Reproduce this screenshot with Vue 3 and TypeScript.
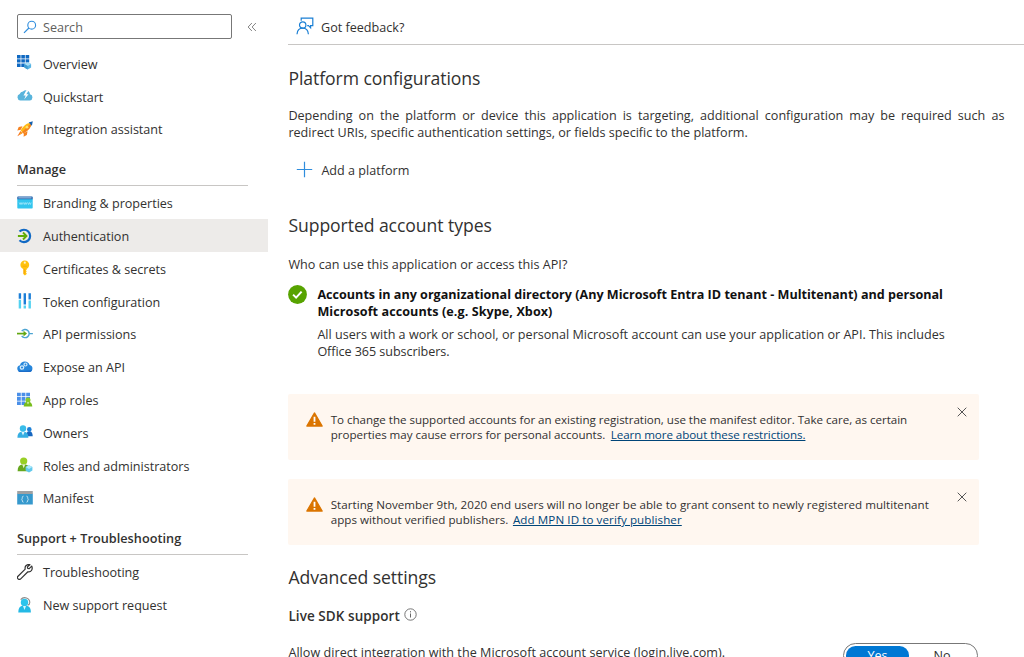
<script setup lang="ts">
import { ref } from 'vue'

interface NavItem {
  label: string
  icon: string
}

interface NavGroup {
  title?: string
  items: NavItem[]
}

const groups: NavGroup[] = [
  {
    items: [
      { label: 'Overview', icon: 'grid' },
      { label: 'Quickstart', icon: 'cloud-bolt' },
      { label: 'Integration assistant', icon: 'rocket' },
    ],
  },
  {
    title: 'Manage',
    items: [
      { label: 'Branding & properties', icon: 'branding' },
      { label: 'Authentication', icon: 'auth' },
      { label: 'Certificates & secrets', icon: 'key' },
      { label: 'Token configuration', icon: 'token' },
      { label: 'API permissions', icon: 'permission' },
      { label: 'Expose an API', icon: 'expose' },
      { label: 'App roles', icon: 'approles' },
      { label: 'Owners', icon: 'owners' },
      { label: 'Roles and administrators', icon: 'admin' },
      { label: 'Manifest', icon: 'manifest' },
    ],
  },
  {
    title: 'Support + Troubleshooting',
    items: [
      { label: 'Troubleshooting', icon: 'wrench' },
      { label: 'New support request', icon: 'support' },
    ],
  },
]

const selected = ref('Authentication')
const liveSdk = ref(true)

const notices = [
  {
    first: 'To change the supported accounts for an existing registration, use the manifest editor. Take care, as certain',
    second: 'properties may cause errors for personal accounts.',
    link: 'Learn more about these restrictions.',
  },
  {
    first: 'Starting November 9th, 2020 end users will no longer be able to grant consent to newly registered multitenant',
    second: 'apps without verified publishers.',
    link: 'Add MPN ID to verify publisher',
  },
]
</script>

<template>
  <div class="page">
    <aside class="sidebar">
      <div class="search-row">
        <label class="search">
          <svg class="search-icon" viewBox="0 0 14 14">
            <circle cx="8.7" cy="5.2" r="3.9" fill="none" stroke="#2f8ddd" stroke-width="1.1" />
            <path d="M5.9 8 1 12.9" fill="none" stroke="#2f8ddd" stroke-width="1.2" />
          </svg>
          <span>Search</span>
        </label>
        <svg class="collapse" viewBox="0 0 10 10">
          <path d="M4.9 1 1.1 5l3.8 4M8.9 1 5.1 5l3.8 4" fill="none" stroke="#777" stroke-width="0.9" />
        </svg>
      </div>

      <nav v-for="(group, gi) in groups" :key="gi">
        <h3 v-if="group.title" class="group-title">
          <span>{{ group.title }}</span>
        </h3>
        <a
          v-for="item in group.items"
          :key="item.label"
          class="nav-item"
          :class="{ selected: item.label === selected }"
          @click="selected = item.label"
        >
          <svg class="nav-icon" viewBox="0 0 16 16">
            <g v-if="item.icon === 'grid'">
              <path fill="#0f69c2" d="M0 0h3.6v3.4H0zM4.3 0h3.6v3.4H4.3zM8.6 0h3.6v3.4H8.6zM0 4.2h3.6v3.4H0zM4.3 4.2h3.6v3.4H4.3zM8.6 4.2h3.6v3.4H8.6zM0 8.4h3.6v3.6H0zM4.3 8.4h3.6v3.6H4.3z" />
              <path fill="#57b4e4" d="m10.7 7.2 3.4 1.8v3.5l-3.4 1.9-3.4-1.9V9z" />
              <path fill="#a9dcf5" d="m10.7 7.2 3.4 1.8-3.4 1.9L7.3 9z" />
              <path fill="#3f9bd1" d="M7.3 9l3.4 1.9v3.5l-3.4-1.9z" />
            </g>
            <g v-else-if="item.icon === 'cloud-bolt'">
              <path fill="#58b4dc" d="M3.3 12.4A3.3 3.3 0 0 1 2.7 6 3.6 3.6 0 0 1 6 3.500 4 4 0 0 1 9 2.200a4.400 4.400 0 0 1 4 4.100 3.100 3.100 0 0 1-.2 6.100z" />
              <path fill="#fff" d="M9.300 2.300 6.500 7.400h2.200l-1.500 4.100 4.300-5.200H9.300l2.500-4z" />
            </g>
            <g v-else-if="item.icon === 'rocket'">
              <path fill="#f58220" d="M5.500 5.200 1.700 6.100.3 9.500l3.500-.7zM10.600 10.300l-.8 3.700-3.200 1.800.3-3.800z" />
              <path fill="#ffb913" d="M15 1.500C10 1.600 6.300 4.800 3.600 9.500l2.800 2.900C11 9.700 14.500 6.200 15 1.500z" />
              <path fill="#f58220" d="M14.900 1.500c-.4 4.700-3.900 8.200-8.500 10.900L5 11z" />
              <path fill="#1761ae" d="M11.600 1.500 15.800.3l-.9 4.400z" />
              <circle cx="10" cy="6.200" r="1.400" fill="#ffdf68" />
              <path fill="#f5701e" d="M3.500 10.100.3 15.300l5.200-3.100z" />
              <path fill="#ffc51b" d="m4 11.200-2.200 3 3-2.200z" />
            </g>
            <g v-else-if="item.icon === 'branding'">
              <path fill="#32c5ee" d="M.3 4h15.400v8.800a.7.7 0 0 1-.7.7H1a.7.7 0 0 1-.7-.7z" />
              <path fill="#155aa8" d="M1 1.500h14a.7.7 0 0 1 .7.7v2.100H.3V2.200a.7.7 0 0 1 .7-.7z" />
              <path fill="#c3d8ee" d="M1.300 2.400h13.300v1H1.300z" />
              <path d="m2.200 7.500.9 2 .9-2 .9 2 .9-2m.6 0 .9 2 .9-2 .9 2 .9-2m.6 0 .9 2 .9-2 .9 2 .9-2" fill="none" stroke="#b6ecfb" stroke-width=".7" />
            </g>
            <g v-else-if="item.icon === 'auth'">
              <path d="M2.500 3.600a6.200 6.200 0 1 1 0 8.700" fill="none" stroke="#1169c4" stroke-width="2.200" />
              <path d="M.9 8h7.700M6 4.500 9.500 8 6 11.500" fill="none" stroke="#62ad09" stroke-width="1.900" />
            </g>
            <g v-else-if="item.icon === 'key'">
              <path fill="#ffc20e" d="M7.800.4a4.400 4.400 0 0 1 4.400 4.400c0 1.900-1 3.400-2.500 4v.9l-.8.9.8.9-.8 1 .8 1v.6L7.900 15.600 6.300 14V8.900A4.300 4.300 0 0 1 3.400 4.800 4.400 4.400 0 0 1 7.800.4z" />
              <circle cx="7.800" cy="2.700" r="1.100" fill="#fff3cc" />
              <path d="M7.200 9v4.800" stroke="#f5910b" stroke-width=".7" />
              <path d="M5.700 6.200h4.200" stroke="#f7a50a" stroke-width=".8" />
            </g>
            <g v-else-if="item.icon === 'token'">
              <path fill="#1c7fd8" d="M1.700.3h2.400v5.500H1.700zM6.600.3H9v11.200H6.600zM11.500.3h2.400v6.200h-2.400z" />
              <path fill="#53d2f1" d="M1.700 6.800h2.400v8.800H1.700zM11.500 7.400h2.400v8.200h-2.400zM6.600 12.500H9v3.100H6.600z" />
            </g>
            <g v-else-if="item.icon === 'permission'">
              <path d="M4.700 5.200a4.100 4.100 0 1 1 0 4.700M12.200 7.600h3.700" fill="none" stroke="#4ca4d2" stroke-width="1.400" />
              <path d="M0 7.600h8.200" stroke="#62a712" stroke-width="1.700" />
              <path fill="#62a712" d="M6.500 4.800 10 7.600l-3.500 2.800z" />
            </g>
            <g v-else-if="item.icon === 'expose'">
              <path fill="#2686db" d="M3.500 13.100A3.500 3.500 0 0 1 3 6.200a5 5 0 0 1 9.600-.2 3.600 3.600 0 0 1-.4 7.100z" />
              <path fill="#1b6cc8" d="M1 11.500c2 .5 10 .8 14.200-1-.5 1.600-1.600 2.600-3 2.600H3.500c-1 0-2-.6-2.500-1.600z" />
              <circle cx="8.500" cy="5.500" r="1.500" fill="none" stroke="#d0e9fa" stroke-width="1.200" />
              <circle cx="5" cy="8.500" r="1.700" fill="none" stroke="#d0e9fa" stroke-width="1.300" />
            </g>
            <g v-else-if="item.icon === 'approles'">
              <path fill="#4a8fe8" d="M0 .7h3.800v3.600H0zM4.600.7h3.800v3.600H4.600zM9.200.7H13v3.600H9.200zM0 5.100h3.800v3.600H0zM4.600 5.100h3.800v3.600H4.600zM9.200 5.100H13v3.600H9.200zM0 9.500h3.800v3.600H0zM4.600 9.500h3.800v3.600H4.600z" />
              <path fill="#78bd1c" d="M6.700 14.600c.1-2.800 1.100-4.200 2.800-4.600h3c1.700.4 2.600 1.800 2.800 4.600z" />
              <circle cx="11" cy="7.900" r="2.500" fill="#86ca27" />
              <path fill="#d8efb7" d="m9.800 10.300 1.200 2.200 1.200-2.200z" />
            </g>
            <g v-else-if="item.icon === 'owners'">
              <path fill="#1767c0" d="M9 12.300c.2-3 1-4.700 2.600-5h1.400c1.700.3 2.600 2 2.700 5z" />
              <circle cx="12.300" cy="5.400" r="2.300" fill="#1c80d7" />
              <path fill="#35aee2" d="M.4 13.700c0-3.700 1.400-5.600 4-5.900h3c2.500.3 4 2.200 4 5.900z" />
              <circle cx="6" cy="4.500" r="3.200" fill="#39bce9" />
              <path fill="#e1f6fd" d="M4.500 7.900 6 11.400l1.500-3.500z" />
            </g>
            <g v-else-if="item.icon === 'admin'">
              <path fill="#66a71e" d="M.6 14.200c0-3.900 1.500-6.300 4.200-6.700h4c2.600.4 4 2.800 4 6.700z" />
              <circle cx="6.700" cy="4" r="3.600" fill="#98cf25" />
              <path fill="#e7f4ce" d="m5.200 7.500 1.500 3.700 1.500-3.700z" />
              <path fill="#61c9ec" d="m12 8.200 3.400 1.800v3.500L12 15.400l-3.400-1.900V10z" />
              <path fill="#aee9fb" d="m12 8.200 3.400 1.800-3.400 1.900L8.600 10z" />
            </g>
            <g v-else-if="item.icon === 'manifest'">
              <path fill="#3699cd" d="M.2 3.500h15.600v11H.2z" />
              <path fill="#a0a1a2" d="M.2 1h15.600v3H.2z" />
              <path d="M6.500 6.200c-2 0-.5 2.500-2 3 1.500.5 0 3 2 3M9.500 6.200c2 0 .5 2.500 2 3-1.500.5 0 3-2 3" fill="none" stroke="#c9e7f5" stroke-width="1" />
            </g>
            <g v-else-if="item.icon === 'wrench'">
              <path d="M14.700 2.100 12.200 4.600l-1.500-.3-.3-1.400L12.900.7C9.800-.1 7.500 2.200 8.200 5.100L1 12.200a1.900 1.900 0 0 0 2.700 2.700l7.200-7.100c3 .7 5.300-2.200 3.800-5.700z" fill="none" stroke="#333" stroke-width="1.200" stroke-linejoin="round" />
            </g>
            <g v-else>
              <path d="M3.700 2.700C6.600-1 12.800.7 12.800 5.600c0 1.400-.8 2.300-2.200 2.600" fill="none" stroke="#8a8a8a" stroke-width="1.100" />
              <path fill="#24b9e5" d="M1.300 15.400c0-4 1.300-6.300 3.900-6.700h4.700c2.700.4 4 2.700 4 6.700z" />
              <circle cx="7.500" cy="5.500" r="3.700" fill="#2cc4ec" />
              <path fill="#daf6fd" d="m6 8.900 1.500 4.200L9 8.900z" />
            </g>
          </svg>
          <span>{{ item.label }}</span>
        </a>
      </nav>
    </aside>

    <main class="main">
      <header class="toolbar">
        <svg class="tool-icon" viewBox="0 0 18 18">
          <g fill="none" stroke="#1a7fd4" stroke-width="1.200">
            <path d="M5.200 3.800V1.100h11.600v7.600h-2.200v2.100l-2.100-2.100h-1.300" />
            <circle cx="6.700" cy="8" r="3.200" />
            <path d="M1 17.200c.3-3.700 2.300-6 5.700-6s5.400 2.300 5.700 6" />
          </g>
        </svg>
        <span>Got feedback?</span>
      </header>

      <section class="platform">
        <h2>Platform configurations</h2>
        <p class="intro">
          <span class="line justified">Depending on the platform or device this application is targeting, additional configuration may be required such as</span>
          <span class="line">redirect URIs, specific authentication settings, or fields specific to the platform.</span>
        </p>
        <button class="add">
          <svg class="plus" viewBox="0 0 17 17">
            <path d="M8.500.8v15.400M.8 8.500h15.400" fill="none" stroke="#2f8ddd" stroke-width="1.200" />
          </svg>
          <span>Add a platform</span>
        </button>
      </section>

      <section class="accounts">
        <h2>Supported account types</h2>
        <p class="question"><span>Who can use this application or access this API?</span></p>
        <div class="account">
          <svg class="check" viewBox="0 0 19 19">
            <circle cx="9.500" cy="9.500" r="9.400" fill="#57a300" />
            <path d="m5.100 9.600 3 3 5.500-6" fill="none" stroke="#fff" stroke-width="2" />
          </svg>
          <div>
            <p class="strong">
              <span class="line">Accounts in any organizational directory (Any Microsoft Entra ID tenant - Multitenant) and personal</span>
              <span class="line strong-rest">Microsoft accounts (e.g. Skype, Xbox)</span>
            </p>
            <p class="detail">
              <span class="line">All users with a work or school, or personal Microsoft account can use your application or API. This includes</span>
              <span class="line detail-rest">Office 365 subscribers.</span>
            </p>
          </div>
        </div>
      </section>

      <div v-for="(notice, ni) in notices" :key="ni" class="notice" :class="{ wide: ni === 1 }">
        <svg class="warn" viewBox="0 0 17 15">
          <path d="M8.500.9 16.200 14.100H.8z" fill="#db7500" stroke="#db7500" stroke-width="1.200" stroke-linejoin="round" />
          <path d="M8.500 4.800v4.900M8.500 10.900v1.800" fill="none" stroke="#fff" stroke-width="1.800" />
        </svg>
        <p class="notice-text">
          <span class="line">{{ notice.first }}</span>
          <span class="line second"><span>{{ notice.second }}</span><a>{{ notice.link }}</a></span>
        </p>
        <svg class="close" viewBox="0 0 10 10">
          <path d="m.7.7 8.600 8.600M9.300.7.7 9.300" fill="none" stroke="#555" stroke-width="1" />
        </svg>
      </div>

      <section class="advanced">
        <h2>Advanced settings</h2>
        <h4>
          <span>Live SDK support</span>
          <svg class="info" viewBox="0 0 13 13">
            <circle cx="6.500" cy="6.500" r="5.700" fill="none" stroke="#666" stroke-width=".9" />
            <path d="M6.500 5.500v4M6.500 3.200v1.200" stroke="#666" stroke-width="1" />
          </svg>
        </h4>
        <div class="setting">
          <span class="setting-label">Allow direct integration with the Microsoft account service (login.live.com).</span>
          <div class="toggle">
            <span :class="{ on: liveSdk }" @click="liveSdk = true">Yes</span>
            <span :class="{ on: !liveSdk }" @click="liveSdk = false">No</span>
          </div>
        </div>
      </section>
    </main>
  </div>
</template>

<style>
body {
  margin: 0;
  overflow: hidden;
}
</style>

<style scoped>
.page {
  display: flex;
  width: 1024px;
  height: 657px;
  overflow: hidden;
  background: #fff;
  color: #323130;
  font-family: 'Open Sans', 'Noto Sans', sans-serif;
  font-size: 12.6px;
}
p,
h2,
h3,
h4 {
  margin: 0;
}
.page span,
h2 {
  white-space: nowrap;
}
.line {
  display: block;
}

.sidebar {
  width: 268px;
  flex: none;
}
.search-row {
  display: flex;
  align-items: center;
  padding: 14px 0 8px 17px;
}
.search {
  box-sizing: border-box;
  display: flex;
  align-items: center;
  gap: 6px;
  width: 215px;
  height: 25px;
  padding-left: 5px;
  border: 1px solid #777;
  border-radius: 2px;
  color: #605e5c;
}
.search span {
  padding-top: 1px;
}
.search-icon {
  width: 14px;
  height: 14px;
}
.collapse {
  width: 10px;
  height: 10px;
  margin-left: 15px;
}
.nav-item {
  box-sizing: border-box;
  display: flex;
  align-items: center;
  gap: 10px;
  height: 32.8px;
  padding-left: 17px;
  cursor: pointer;
  letter-spacing: -0.02px;
}
.nav-item span {
  padding-top: 2px;
}
.nav-item.selected {
  background: #edebe9;
}
.nav-icon {
  width: 16px;
  height: 16px;
  flex: none;
}
.group-title {
  box-sizing: border-box;
  height: 40.4px;
  margin: 0 20.5px 0.6px 17px;
  padding-top: 14.6px;
  border-bottom: 1px solid #c8c6c4;
  font-size: 12.7px;
  font-weight: 600;
  line-height: 19px;
  letter-spacing: 0.03px;
}

.main {
  flex: 1;
  min-width: 0;
  padding-left: 20.4px;
}
.toolbar {
  box-sizing: border-box;
  display: flex;
  align-items: center;
  gap: 7px;
  height: 45px;
  padding: 10px 0 0 7.6px;
  border-bottom: 1px solid #c8c6c4;
}
.tool-icon {
  width: 18px;
  height: 18px;
  margin-top: -3px;
}
h2 {
  height: 26px;
  font-size: 17.6px;
  font-weight: 400;
  line-height: 26px;
  letter-spacing: -0.07px;
}
.platform {
  height: 147px;
  padding-top: 20px;
}
.intro {
  width: 716px;
  margin-top: 15.6px;
  line-height: 17.3px;
}
.page .justified {
  text-align: justify;
  text-align-last: justify;
  white-space: normal;
}
.add {
  display: flex;
  align-items: center;
  gap: 8px;
  margin: 20px 0 0 8px;
  padding: 0;
  border: 0;
  background: none;
  color: inherit;
  font: inherit;
}
.add span {
  padding-top: 1px;
}
.plus {
  width: 17px;
  height: 17px;
  margin-top: -1px;
}
.accounts {
  height: 182px;
}
.question {
  margin-top: 17.5px;
  line-height: 18px;
}
.question span {
  letter-spacing: 0.03px;
}
.account {
  display: flex;
  gap: 10px;
  margin-top: 12.3px;
}
.check {
  width: 19px;
  height: 19px;
  flex: none;
  margin-top: -0.7px;
}
.strong {
  color: #111;
  font-weight: 700;
  line-height: 17.2px;
}
.strong-rest {
  letter-spacing: 0.07px;
}
.detail {
  margin-top: 5.5px;
  line-height: 17.2px;
}
.detail-rest {
  letter-spacing: -0.07px;
}
.notice {
  box-sizing: border-box;
  display: flex;
  width: 690.5px;
  height: 65.5px;
  margin-bottom: 19.5px;
  padding: 17.7px 12px 0 17.3px;
  border-radius: 2px;
  background: #fff7f0;
  font-size: 11.6px;
  letter-spacing: -0.03px;
}
.notice.wide {
  letter-spacing: 0.035px;
}
.warn {
  width: 17px;
  height: 15px;
  flex: none;
}
.notice-text {
  flex: 1;
  margin-left: 8px;
  line-height: 15.5px;
}
.second {
  display: flex;
  gap: 5.5px;
}
.second a {
  color: #004578;
  text-decoration: underline;
  white-space: nowrap;
}
.notice:not(.wide) a {
  letter-spacing: -0.07px;
}
.notice.wide a {
  letter-spacing: 0.09px;
}
.notice.wide .second {
  gap: 4.5px;
}
.close {
  width: 10px;
  height: 10px;
  margin-top: -5px;
}
h4 {
  display: flex;
  align-items: center;
  gap: 4px;
  height: 20px;
  margin-top: 16px;
  font-size: 13.5px;
  font-weight: 600;
  letter-spacing: 0.07px;
}
.info {
  width: 13px;
  height: 13px;
  margin-top: -4px;
}
.setting {
  display: flex;
  justify-content: space-between;
  margin-top: 17px;
  padding-right: 46px;
  line-height: 20px;
}
.setting-label {
  letter-spacing: 0.035px;
}
.toggle {
  box-sizing: border-box;
  display: flex;
  width: 135px;
  height: 25px;
  padding: 2px;
  border: 1px solid #777;
  border-radius: 13px;
}
.toggle span {
  flex: 66;
  border-radius: 10px;
  text-align: center;
}
.toggle span:first-child {
  flex: 63;
}
.toggle .on {
  background: #0078d4;
  color: #fff;
}
</style>
